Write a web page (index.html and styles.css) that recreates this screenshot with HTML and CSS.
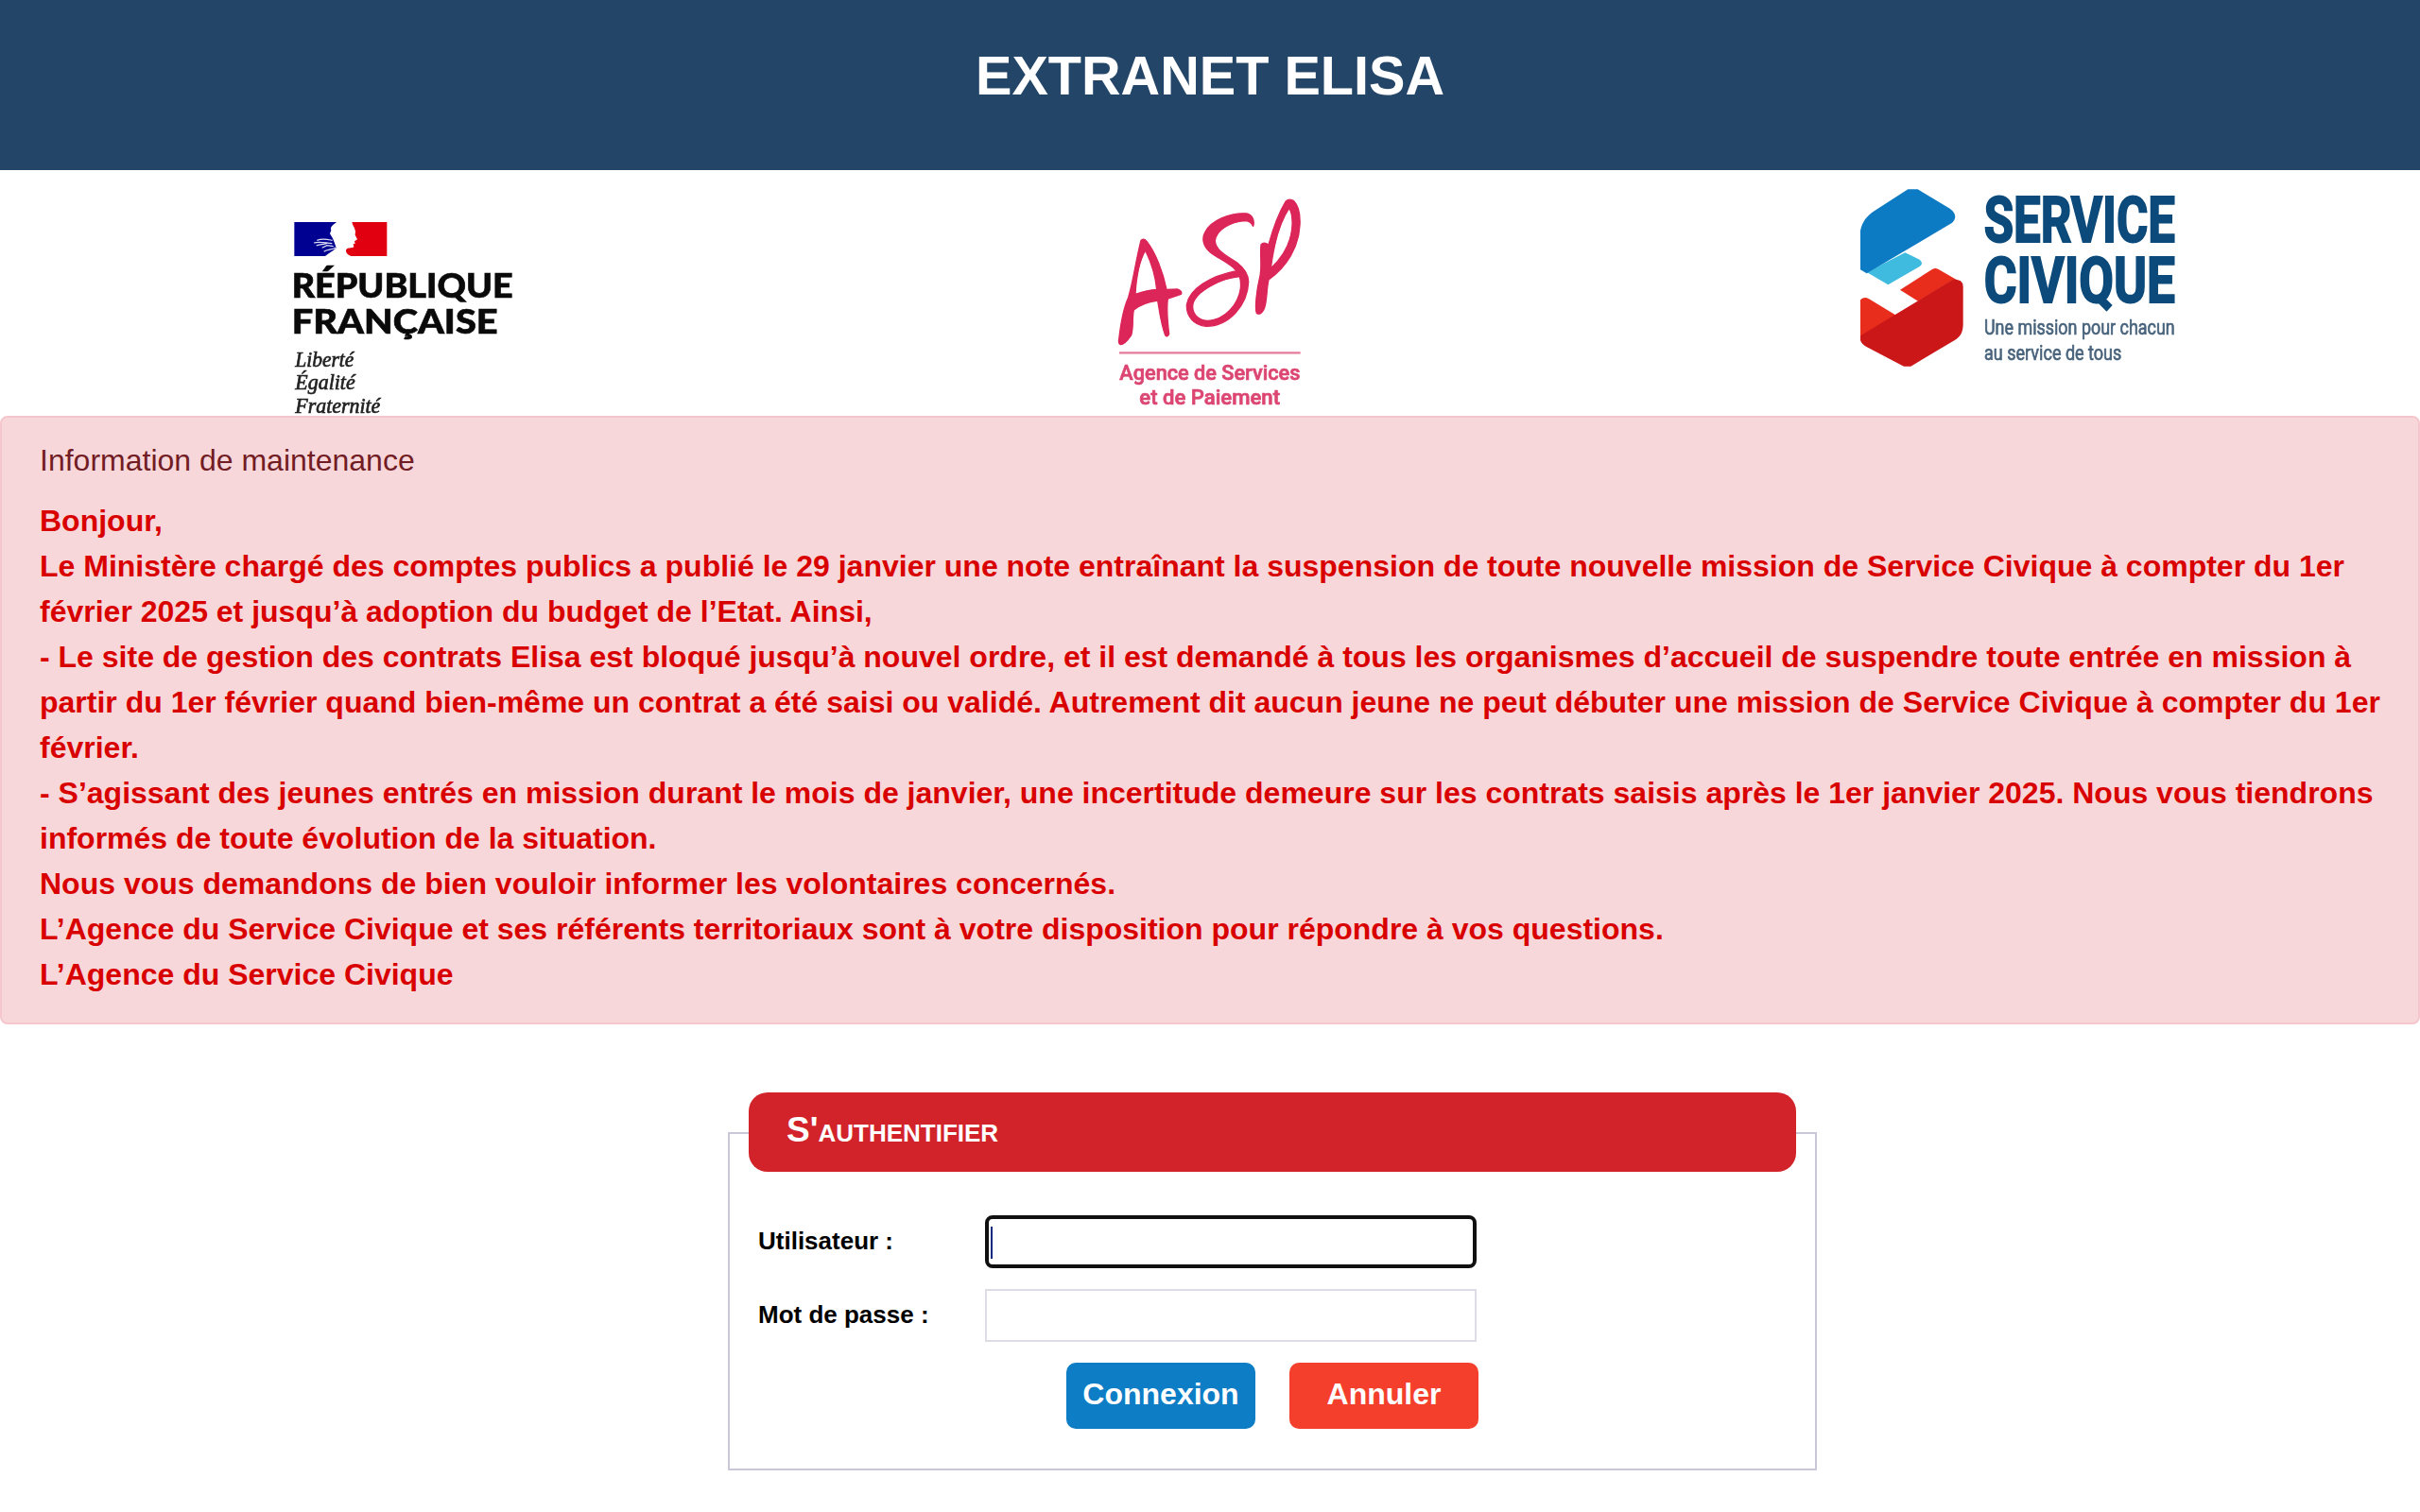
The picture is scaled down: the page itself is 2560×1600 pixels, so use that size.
FILE: index.html
```html
<!DOCTYPE html>
<html lang="fr">
<head>
<meta charset="utf-8">
<title>Extranet ELISA</title>
<link rel="stylesheet" href="styles.css">
</head>
<body>
<header class="banner"><h1>EXTRANET ELISA</h1></header>
<div class="logos">
  <svg class="logo logo-rf" viewBox="0 -90 840 780" role="img" aria-label="République Française">
    <path fill="#000091" d="M64 75H198C188 84 176 90 181 101L177 112L186 127L192 142L197 157C186 168 174 174 162 183H64Z"/>
    <path fill="none" stroke="#dfe0f5" stroke-width="3.5" d="M136 133C154 126 168 130 185 133M126 141C146 135 164 142 184 143M134 150C148 144 160 148 172 140M152 157L168 149L188 152M158 169C170 160 182 165 196 156"/>
    <path fill="#e1000f" d="M247 75H358V183H244C233 180 225 171 229 162C234 155 246 160 253 154L251 145L257 143L255 136L264 130L257 116L258 104C256 92 249 87 247 75Z"/>
    <g class="rf-name">
      <text x="56" y="316" textLength="702" lengthAdjust="spacingAndGlyphs">RÉPUBLIQUE</text>
      <text x="56" y="430" textLength="654" lengthAdjust="spacingAndGlyphs">FRANÇAISE</text>
    </g>
    <g class="rf-motto">
      <text x="67" y="534" textLength="186" lengthAdjust="spacingAndGlyphs">Liberté</text>
      <text x="67" y="606" textLength="190" lengthAdjust="spacingAndGlyphs">Égalité</text>
      <text x="67" y="681" textLength="270" lengthAdjust="spacingAndGlyphs">Fraternité</text>
    </g>
  </svg>
  <svg class="logo logo-asp" viewBox="-60 -30 720 780" role="img" aria-label="Agence de Services et de Paiement">
    <g fill="#dc2558" fill-rule="evenodd" stroke="#dc2558" stroke-width="4" stroke-linejoin="round">
      <path d="M141 193Q149 184 159 196C186 230 210 290 222 349L256 348Q274 354 268 364L226 378C222 410 225 450 230 490Q226 502 218 494C205 460 200 420 194 384C166 388 138 396 118 414C112 440 118 470 110 494C100 508 90 524 76 524Q68 520 71 508C76 462 84 412 101 374C116 326 126 250 141 193ZM155 225C138 254 126 310 123 364C146 356 168 350 191 349C187 304 172 260 155 225Z"/>
      <path d="M497 148C492 138 484 131 470 131C425 134 380 160 376 194C378 228 418 244 446 264C472 284 482 304 482 325C480 398 420 466 348 466C308 462 285 434 286 398C294 348 360 306 444 290C426 266 384 250 360 230C336 210 334 184 345 166C364 130 424 104 476 108C496 112 502 132 497 148ZM454 308C394 314 324 350 307 390C298 424 322 448 354 448C408 446 450 396 457 346Q459 324 454 308Z"/>
      <path d="M522 207Q530 196 546 207C560 156 578 106 600 70Q612 58 626 68C640 82 647 108 645 145C642 214 604 276 546 318C538 352 542 392 530 414Q520 432 508 424C502 408 508 350 518 310C526 276 518 240 522 207ZM611 91C582 134 562 210 553 282C594 244 618 196 621 146C622 124 618 100 611 91Z"/>
    </g>
    <path stroke="#e57b99" stroke-width="7" d="M72 550H647"/>
    <g class="asp-name">
      <text x="73" y="636" textLength="573" lengthAdjust="spacingAndGlyphs">Agence de Services</text>
      <text x="136" y="714" textLength="446" lengthAdjust="spacingAndGlyphs">et de Paiement</text>
    </g>
  </svg>
  <svg class="logo logo-sc" viewBox="0 0 1110 780" role="img" aria-label="Service Civique">
    <path fill="#3fbbe0" d="M74 324L196 262L242 284Q256 296 242 306L142 364Z"/>
    <path fill="#0d7ac4" d="M54 192C60 164 74 146 98 130L205 61H236L338 122C358 136 360 154 344 168L74 328L54 316Z"/>
    <path fill="#e92d1c" d="M180 380L282 315Q292 309 302 315L354 345L237 416ZM54 412Q66 400 80 408L169 462L54 530Z"/>
    <path fill="#cc1719" d="M54 526L352 345L372 352Q380 358 380 370V488C380 514 372 528 352 541L214 623H192L72 560Q58 552 54 540Z"/>
    <g class="sc-name">
      <text x="446" y="229" textLength="607" lengthAdjust="spacingAndGlyphs">SERVICE</text>
      <text x="446" y="421" textLength="607" lengthAdjust="spacingAndGlyphs">CIVIQUE</text>
    </g>
    <g class="sc-motto">
      <text x="447" y="522" textLength="605" lengthAdjust="spacingAndGlyphs">Une mission pour chacun</text>
      <text x="447" y="602" textLength="436" lengthAdjust="spacingAndGlyphs">au service de tous</text>
    </g>
  </svg>
</div>
<section class="alert">
  <p class="alert-title">Information de maintenance</p>
  <p class="alert-text">Bonjour,<br>
  Le Ministère chargé des comptes publics a publié le 29 janvier une note entraînant la suspension de toute nouvelle mission de Service Civique à compter du 1er février 2025 et jusqu’à adoption du budget de l’Etat. Ainsi,<br>
  - Le site de gestion des contrats Elisa est bloqué jusqu’à nouvel ordre, et il est demandé à tous les organismes d’accueil de suspendre toute entrée en mission à partir du 1er février quand bien-même un contrat a été saisi ou validé. Autrement dit aucun jeune ne peut débuter une mission de Service Civique à compter du 1er février.<br>
  - S’agissant des jeunes entrés en mission durant le mois de janvier, une incertitude demeure sur les contrats saisis après le 1er janvier 2025. Nous vous tiendrons informés de toute évolution de la situation.<br>
  Nous vous demandons de bien vouloir informer les volontaires concernés.<br>
  L’Agence du Service Civique et ses référents territoriaux sont à votre disposition pour répondre à vos questions.<br>
  L’Agence du Service Civique</p>
</section>
<form class="login">
  <h2 class="legend">S'authentifier</h2>
  <div class="row">
    <label for="user">Utilisateur :</label>
    <div class="field focused" id="user"><span class="caret"></span></div>
  </div>
  <div class="row">
    <label for="pass">Mot de passe :</label>
    <input class="field" id="pass" type="password">
  </div>
  <div class="actions">
    <button class="btn primary" type="button">Connexion</button>
    <button class="btn cancel" type="button">Annuler</button>
  </div>
</form>
</body>
</html>
```
FILE: styles.css
```css
* { box-sizing: border-box; }
body {
  margin: 0;
  background: #fff;
  font-family: "Liberation Sans", Arial, sans-serif;
  font-size: 32px;
  line-height: 48px;
}
h1, h2, p { margin: 0; }

.banner {
  height: 180px;
  padding-top: 44px;
  background: #234567;
  color: #fff;
  text-align: center;
}
.banner h1 { font-size: 57.6px; line-height: 72px; }

.logos {
  display: flex;
  justify-content: space-between;
  height: 260px;
  padding: 0 240px 0 290px;
}
.logo { display: block; height: 260px; filter: blur(0.7px); }
.logo-rf { width: 280px; }
.logo-asp { width: 240px; }
.logo-sc { width: 370px; }
.rf-name { font: 900 110px Lato, sans-serif; fill: #0a0a0a; stroke: #0a0a0a; stroke-width: 2px; }
.rf-motto { font: italic 68px "Liberation Serif", serif; fill: #222; stroke: #222; stroke-width: 2px; }
.asp-name { font: 500 66px Roboto, sans-serif; fill: #dc4672; stroke: #dc4672; stroke-width: 2px; }
.sc-name { font: 700 202px Roboto, sans-serif; fill: #0b4a7a; stroke: #0b4a7a; stroke-width: 6px; }
.sc-motto { font: 400 68px Roboto, sans-serif; fill: #48637c; stroke: #48637c; stroke-width: 2px; }

.alert {
  height: 644px;
  padding: 21px 40px 0;
  border: 2px solid #f5c6cb;
  border-radius: 8px;
  background: #f8d7da;
  color: #721c24;
}
.alert-text { margin-top: 16px; color: #d90000; font-weight: 700; }

.login {
  width: 1152px;
  height: 358px;
  margin: 114px 0 0 770px;
  padding: 0 20px 0 30px;
  border: 2px solid #c8c8d8;
}
.legend {
  width: 1108px;
  height: 84px;
  margin: -44px 0 46px -10px;
  padding: 16px 40px;
  border-radius: 20px;
  background: #d2232a;
  color: #fff;
  font-size: 37px;
  font-variant: small-caps;
}
.row { display: flex; align-items: center; height: 56px; margin-bottom: 22px; }
.row label { width: 240px; height: 56px; font-size: 26px; font-weight: 700; line-height: 54px; }
.field {
  width: 520px;
  height: 56px;
  border: 2px solid #dddde6;
  background: #fff;
}
.focused { padding: 8px 2px; border: 4px solid #101010; border-radius: 8px; }
.caret { display: block; width: 2px; height: 34px; background: #0b2a80; }
.actions { display: flex; gap: 36px; padding-left: 326px; }
.btn {
  width: 200px;
  height: 70px;
  padding: 0 0 4px;
  border: 0;
  border-radius: 10px;
  color: #fff;
  font: 700 32px "Liberation Sans", Arial, sans-serif;
}
.primary { background: #0d7dc6; }
.cancel { background: #f43f2c; }
```
